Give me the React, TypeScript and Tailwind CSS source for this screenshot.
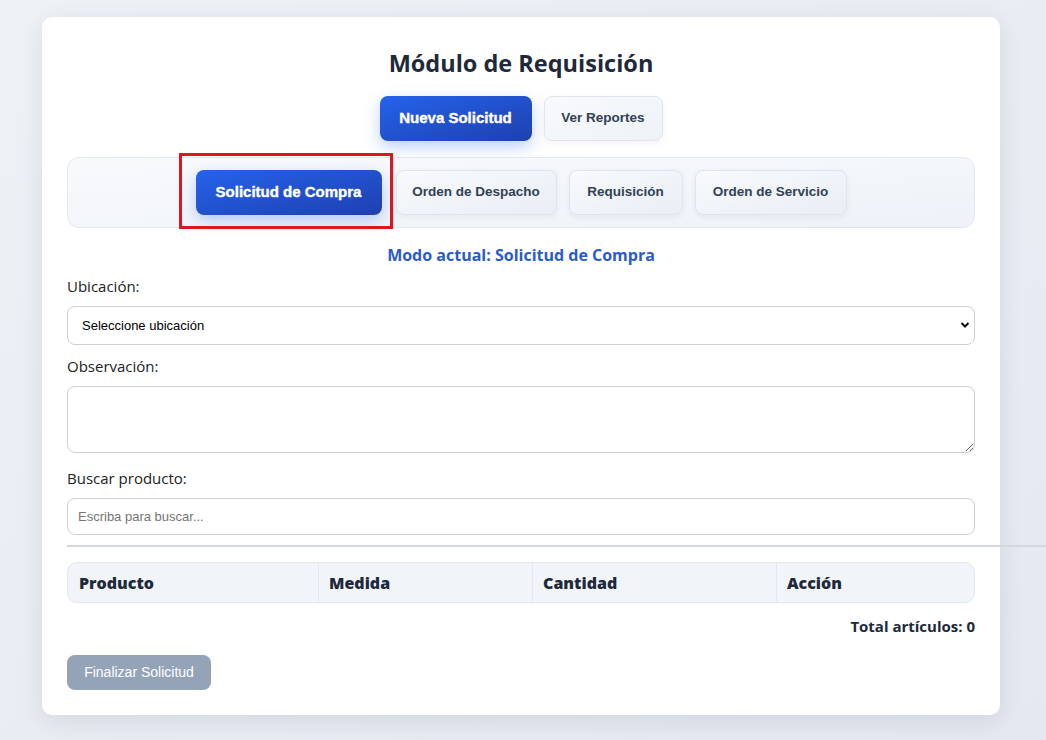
import React from "react";

const sans = { fontFamily: "'Open Sans', 'Noto Sans', sans-serif" };

export default function App() {
  return (
    <div className="min-h-screen w-full overflow-hidden bg-gradient-to-br from-[#eef1f5] to-[#e4e8f1] pt-[17px] pb-[25px]">
      <div
        className="relative ml-[42px] w-[958px] rounded-[10px] bg-white px-[25px] pt-[30px] pb-[25px] shadow-[0_6px_24px_rgba(30,41,59,0.10)]"
        style={sans}
      >
        <h2 className="text-center text-[23.5px] leading-[32px] font-bold text-[#1e293b] font-['Open_Sans','Noto_Sans',sans-serif]">
          Módulo de Requisición
        </h2>

        <div className="mt-[17px] flex justify-center gap-3 font-['Liberation_Sans',Arial,sans-serif]">
          <button className="h-[45px] w-[152px] rounded-[8px] bg-gradient-to-br from-[#2563eb] to-[#1e40af] text-[15px] font-bold text-white shadow-[0_6px_16px_rgba(37,99,235,0.30)] [-webkit-text-stroke:0.4px_white]">
            Nueva Solicitud
          </button>
          <button className="h-[45px] w-[119px] rounded-[8px] border border-[#dfe5ee] bg-gradient-to-br from-[#f8fafc] to-[#eef2f7] text-[13.5px] font-bold text-[#334155] shadow-[0_2px_6px_rgba(30,41,59,0.06)]">
            Ver Reportes
          </button>
        </div>

        <div className="relative mt-[16px] flex h-[71px] items-center justify-center gap-3 rounded-[12px] border border-[#e4e9f0] bg-gradient-to-br from-[#f8fafc] to-[#eef2f8] font-['Liberation_Sans',Arial,sans-serif]">
          <button className="mr-[2px] h-[45px] w-[186px] rounded-[8px] bg-gradient-to-br from-[#2563eb] to-[#1e40af] text-[15px] font-bold text-white shadow-[0_6px_16px_rgba(37,99,235,0.30)] [-webkit-text-stroke:0.4px_white]">
            Solicitud de Compra
          </button>
          <button className="h-[45px] w-[161px] rounded-[8px] border border-[#dfe5ee] bg-gradient-to-br from-[#f8fafc] to-[#e9eef5] text-[13.5px] font-bold text-[#334155] shadow-[0_2px_6px_rgba(30,41,59,0.06)]">
            Orden de Despacho
          </button>
          <button className="h-[45px] w-[114px] rounded-[8px] border border-[#dfe5ee] bg-gradient-to-br from-[#f8fafc] to-[#e9eef5] text-[13.5px] font-bold text-[#334155] shadow-[0_2px_6px_rgba(30,41,59,0.06)]">
            Requisición
          </button>
          <button className="h-[45px] w-[152px] rounded-[8px] border border-[#dfe5ee] bg-gradient-to-br from-[#f8fafc] to-[#e9eef5] text-[13.5px] font-bold text-[#334155] shadow-[0_2px_6px_rgba(30,41,59,0.06)]">
            Orden de Servicio
          </button>
          <div className="pointer-events-none absolute left-[111px] top-[-5px] h-[76px] w-[214px] border-[3px] border-[#e0151f]" />
        </div>

        <p className="mt-[15px] text-center text-[16px] leading-[24px] font-bold text-[#2a5bc9]">
          Modo actual: Solicitud de Compra
        </p>

        <label className="mt-[7px] block text-[15px] leading-[24px] text-[#222]">Ubicación:</label>
        <div className="relative mt-[8px]">
          <select className="h-[39px] w-full appearance-none rounded-[8px] border border-[#cfcfcf] bg-white pl-[14px] font-['Liberation_Sans',Arial,sans-serif] text-[13px] text-black">
            <option>Seleccione ubicación</option>
          </select>
          <svg className="pointer-events-none absolute right-[5px] top-[15px]" width="10" height="8" viewBox="0 0 10 8">
            <path d="M1.5 2 L5 5.5 L8.5 2" fill="none" stroke="#111" strokeWidth="2" />
          </svg>
        </div>

        <label className="mt-[9px] block text-[15px] leading-[24px] text-[#222]">Observación:</label>
        <textarea className="mt-[8px] block h-[67px] w-full rounded-[8px] border border-[#cfcfcf] bg-white p-2 text-[13px]" />

        <label className="mt-[13px] block text-[15px] leading-[24px] text-[#222]">Buscar producto:</label>
        <input
          className="mt-[8px] block h-[37px] w-full rounded-[8px] border border-[#cfcfcf] bg-white px-[10px] font-['Liberation_Sans',Arial,sans-serif] text-[13px] placeholder:text-[#757575]"
          placeholder="Escriba para buscar..."
        />

        <div className="mt-[10px] h-[2px] w-[979px] bg-[#d3d8de]" />

        <div className="mt-[15px] flex h-[41px] overflow-hidden rounded-[10px] border border-[#e2e8f0] bg-[#f1f5f9] text-[16px] font-extrabold text-[#1e293b]">
          <div className="flex w-[251px] items-center border-r border-[#e2e8f0] pl-[11px]">Producto</div>
          <div className="flex w-[214px] items-center border-r border-[#e2e8f0] pl-[10px]">Medida</div>
          <div className="flex w-[244px] items-center border-r border-[#e2e8f0] pl-[10px]">Cantidad</div>
          <div className="flex flex-1 items-center pl-[10px]">Acción</div>
        </div>

        <p className="mt-[11px] text-right text-[15px] leading-[24px] font-bold text-[#1e293b]">Total artículos: 0</p>

        <button className="mt-[17px] h-[35px] w-[144px] rounded-[8px] bg-[#94a3b8] font-['Liberation_Sans',Arial,sans-serif] text-[14px] text-white">
          Finalizar Solicitud
        </button>
      </div>
    </div>
  );
}
